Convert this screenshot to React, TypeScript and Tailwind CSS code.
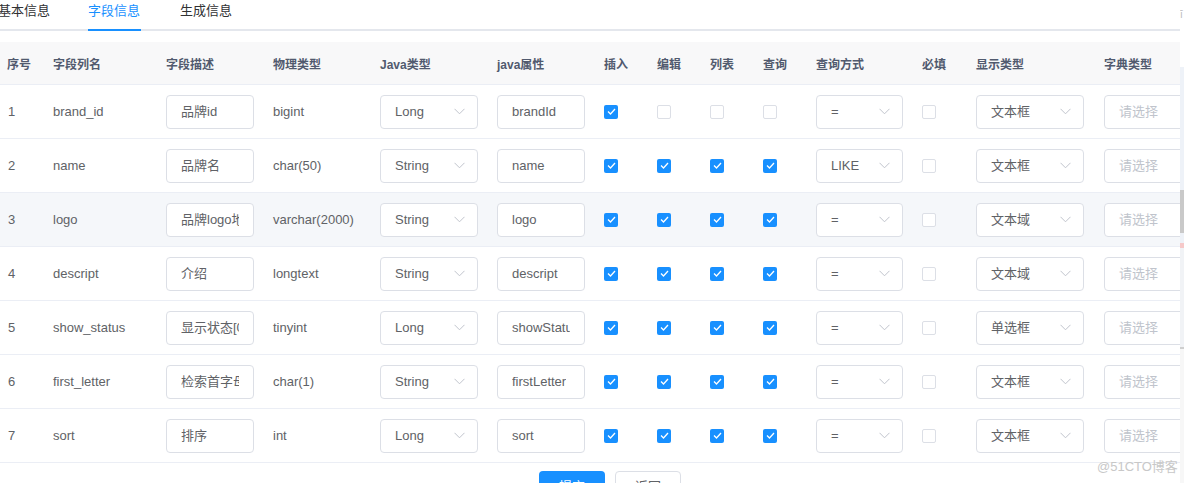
import React from "react";

type Row = {
  no: number;
  column: string;
  comment: string;
  dbType: string;
  javaType: string;
  javaField: string;
  checks: boolean[];
  query: string;
  html: string;
};

const rows: Row[] = [
  { no: 1, column: "brand_id", comment: "品牌id", dbType: "bigint", javaType: "Long", javaField: "brandId", checks: [true, false, false, false], query: "=", html: "文本框" },
  { no: 2, column: "name", comment: "品牌名", dbType: "char(50)", javaType: "String", javaField: "name", checks: [true, true, true, true], query: "LIKE", html: "文本框" },
  { no: 3, column: "logo", comment: "品牌logo地址", dbType: "varchar(2000)", javaType: "String", javaField: "logo", checks: [true, true, true, true], query: "=", html: "文本域" },
  { no: 4, column: "descript", comment: "介绍", dbType: "longtext", javaType: "String", javaField: "descript", checks: [true, true, true, true], query: "=", html: "文本域" },
  { no: 5, column: "show_status", comment: "显示状态[0-不显示；1-显示]", dbType: "tinyint", javaType: "Long", javaField: "showStatus", checks: [true, true, true, true], query: "=", html: "单选框" },
  { no: 6, column: "first_letter", comment: "检索首字母", dbType: "char(1)", javaType: "String", javaField: "firstLetter", checks: [true, true, true, true], query: "=", html: "文本框" },
  { no: 7, column: "sort", comment: "排序", dbType: "int", javaType: "Long", javaField: "sort", checks: [true, true, true, true], query: "=", html: "文本框" },
];

const headers = ["序号", "字段列名", "字段描述", "物理类型", "Java类型", "java属性", "插入", "编辑", "列表", "查询", "查询方式", "必填", "显示类型", "字典类型"];

const cols =
  "grid grid-cols-[46px_113px_107px_107px_117px_107px_53px_53px_53px_53px_106px_54px_128px_1fr]";

function Chevron() {
  return (
    <svg width="11" height="7" viewBox="0 0 11 7" className="shrink-0">
      <path d="M0.5 0.8 L5.5 5.8 L10.5 0.8" fill="none" stroke="#c0c4cc" strokeWidth="1" />
    </svg>
  );
}

function TextInput({ value }: { value: string }) {
  return (
    <div className="w-[88px] h-[34px] rounded border border-[#dcdfe6] bg-white px-[14px] flex items-center">
      <div className="overflow-hidden whitespace-nowrap text-[#606266]">{value}</div>
    </div>
  );
}

function Select({ value, width, placeholder }: { value?: string; width: string; placeholder?: string }) {
  return (
    <div className={`${width} h-[34px] rounded border border-[#dcdfe6] bg-white pl-[14px] pr-[12px] flex items-center justify-between shrink-0`}>
      {value ? (
        <span className="text-[#606266] whitespace-nowrap">{value}</span>
      ) : (
        <span className="text-[#c0c4cc] whitespace-nowrap">{placeholder}</span>
      )}
      <Chevron />
    </div>
  );
}

function Checkbox({ checked }: { checked: boolean }) {
  if (checked) {
    return (
      <div className="w-[14px] h-[14px] rounded-[2px] bg-[#1890ff] flex items-center justify-center">
        <svg width="9" height="7" viewBox="0 0 9 7">
          <path d="M1 3.5 L3.5 6 L8 1" fill="none" stroke="white" strokeWidth="1.3" />
        </svg>
      </div>
    );
  }
  return <div className="w-[14px] h-[14px] rounded-[2px] border border-[#dcdfe6] bg-white" />;
}

export default function App() {
  return (
    <div
      className="relative w-[1184px] h-[483px] overflow-hidden bg-white flex text-[13px]"
      style={{ fontFamily: '"Liberation Sans", "Noto Sans CJK SC", sans-serif' }}
    >
      <div className="w-[1180px] shrink-0 overflow-hidden flex flex-col">
        {/* tabs */}
        <div className="h-[31px] border-b-2 border-[#e4e7ed] flex shrink-0 -ml-[2px] text-[13px]">
          <div className="w-[90px] leading-[22px] text-[#303133]">基本信息</div>
          <div className="relative w-[92px] leading-[22px] text-[#1890ff]">
            <span>字段信息</span>
            <div className="absolute left-0 w-[53px] -bottom-[2px] h-[2px] bg-[#1890ff]" />
          </div>
          <div className="leading-[22px] text-[#303133]">生成信息</div>
        </div>

        {/* table */}
        <div className="mt-[11px]">
          <div className={`${cols} h-[43px] bg-[#f8f8f9] items-center text-[12px] font-bold text-[#515a6e] border-b border-[#ebeef5]`}>
            {headers.map((h) => (
              <div key={h} className="pl-[7px] pt-[3px] whitespace-nowrap">
                {h}
              </div>
            ))}
          </div>
          {rows.map((r) => (
            <div
              key={r.no}
              className={`${cols} h-[54px] items-center border-b border-[#ebeef5] text-[#606266] ${r.no === 3 ? "bg-[#f5f7fa]" : "bg-white"}`}
            >
              <div className="pl-[8px]">{r.no}</div>
              <div className="pl-[7px]">{r.column}</div>
              <div className="pl-[7px]">
                <TextInput value={r.comment} />
              </div>
              <div className="pl-[7px]">{r.dbType}</div>
              <div className="pl-[7px]">
                <Select value={r.javaType} width="w-[98px]" />
              </div>
              <div className="pl-[7px]">
                <TextInput value={r.javaField} />
              </div>
              {r.checks.map((c, i) => (
                <div key={i} className="pl-[7px]">
                  <Checkbox checked={c} />
                </div>
              ))}
              <div className="pl-[7px]">
                <Select value={r.query} width="w-[87px]" />
              </div>
              <div className="pl-[7px]">
                <Checkbox checked={false} />
              </div>
              <div className="pl-[7px]">
                <Select value={r.html} width="w-[108px]" />
              </div>
              <div className="pl-[7px] overflow-hidden">
                <Select width="w-[108px]" placeholder="请选择" />
              </div>
            </div>
          ))}
        </div>

        {/* footer buttons */}
        <div className="flex gap-[10px] pl-[539px] mt-[8px]">
          <button className="w-[66px] h-[32px] rounded bg-[#1890ff] text-white text-[13px]">提交</button>
          <button className="w-[66px] h-[32px] rounded border border-[#dcdfe6] bg-white text-[#606266] text-[13px]">返回</button>
        </div>
      </div>

      {/* neighbouring window strip */}
      <div className="w-[4px] flex flex-col bg-white">
        <div className="h-[67px] text-[10px] text-[#bbb] leading-[30px] overflow-hidden">ī</div>
        <div className="h-[123px] bg-[#eef2f8]" />
        <div className="h-[43px] bg-[#c9c9c9]" />
        <div className="h-[10px] bg-[#eef2f8]" />
        <div className="h-[5px] bg-[#f6c9c9]" />
        <div className="h-[99px] bg-[#f1f3f6]" />
        <div className="h-[2px] bg-[#cfcfcf]" />
        <div className="flex-1 bg-[#f7f7f7]" />
      </div>

      <div className="absolute left-[1097px] top-[457px] text-[13px] text-[#c8c8c8] whitespace-nowrap">@51CTO博客</div>
    </div>
  );
}
